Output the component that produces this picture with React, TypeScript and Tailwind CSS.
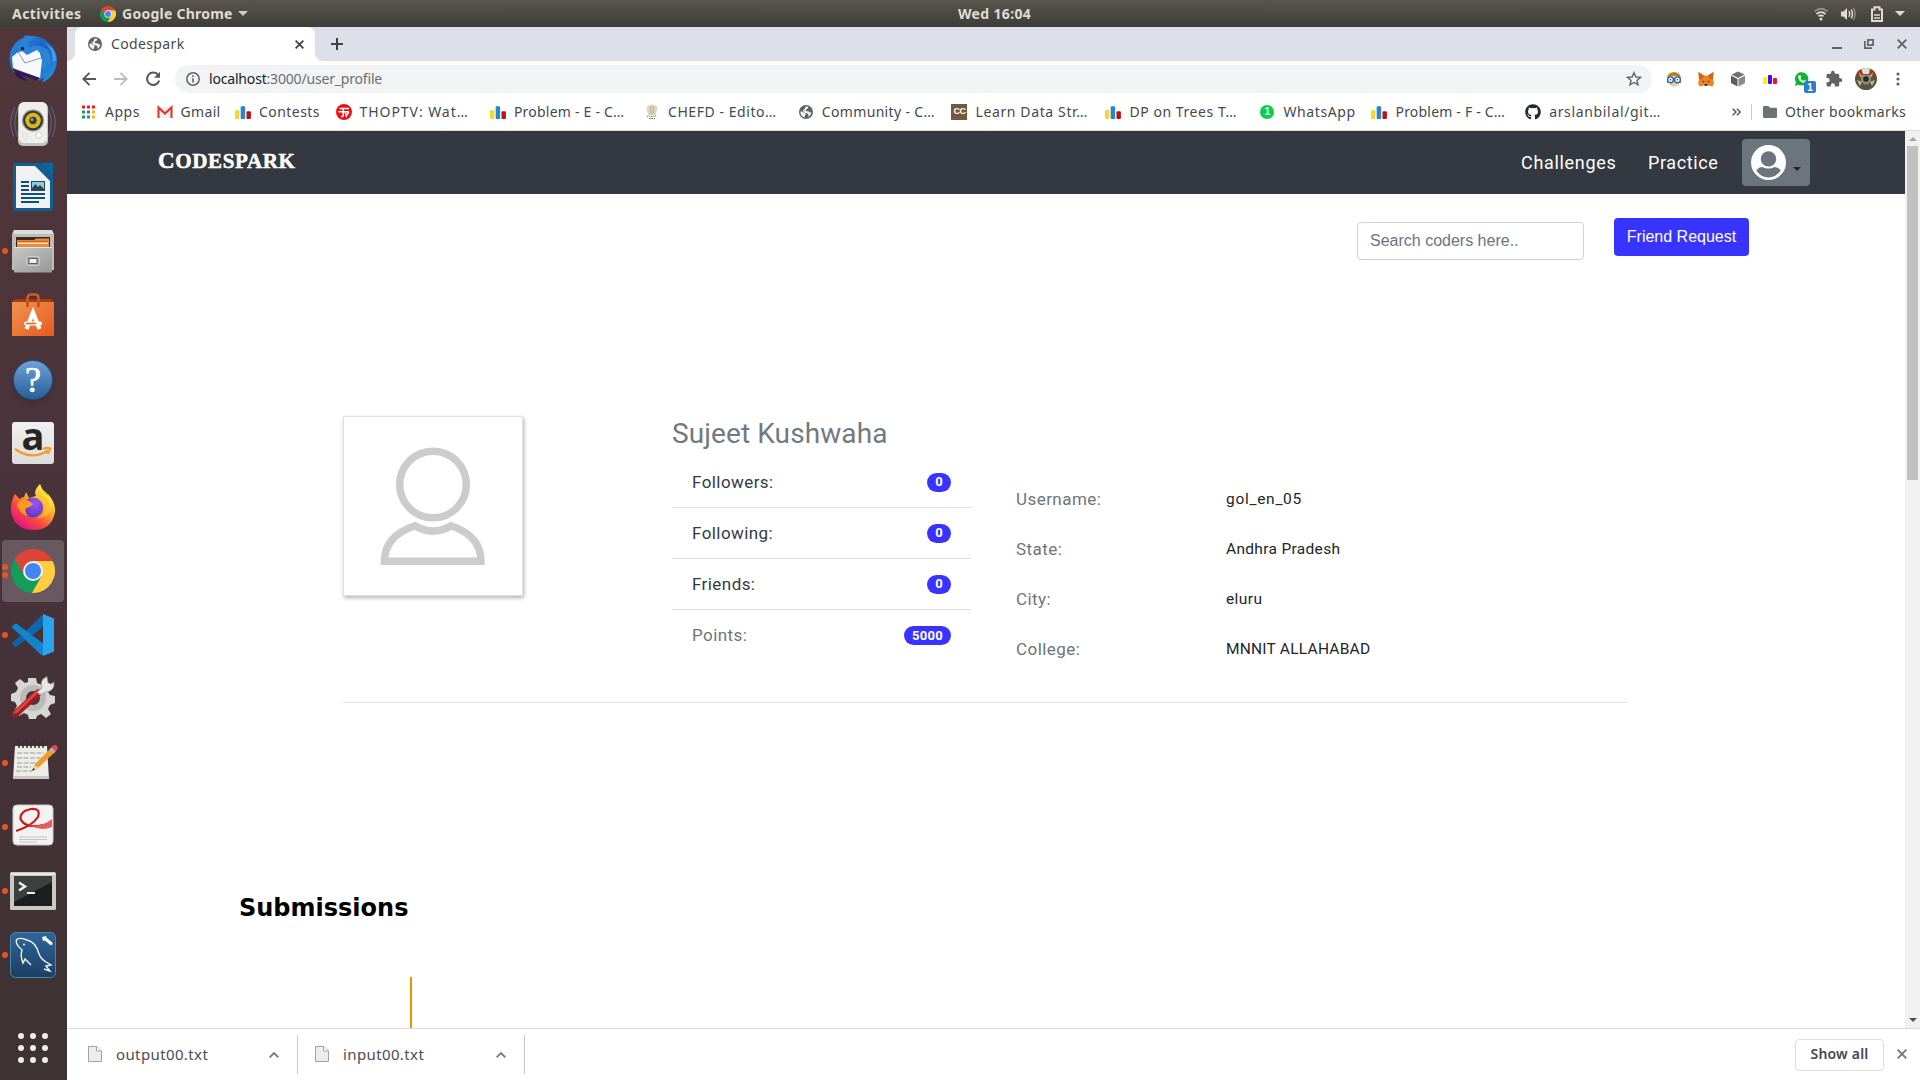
import type { ReactNode } from "react";
import { FaGithub } from "react-icons/fa";

/* ---------- Shared icons ---------- */

function ChromeLogo({ className }: { className: string }) {
  return (
    <svg viewBox="2 2 44 44" className={className}>
      <path d="M24 24V14H43.6A22 22 0 0 0 5.54 12.03L15.34 29Z" fill="#dc4437" />
      <path d="M24 24L15.34 29 5.54 12.03A22 22 0 0 0 22.86 45.97L32.66 29Z" fill="#129d58" />
      <path d="M24 24L32.66 29 22.86 45.97A22 22 0 0 0 43.6 14H24Z" fill="#ffcd41" />
      <circle cx="24" cy="24" r="10" fill="#f3f3f3" />
      <circle cx="24" cy="24" r="8" fill="#4285f4" />
    </svg>
  );
}

function Globe() {
  return (
    <svg viewBox="0 0 16 16" className="size-4 shrink-0">
      <circle cx="8" cy="8" r="7" fill="#5f6368" />
      <path d="M2.4 7.6c1.3-.4 2.5 0 3.2 1.1l1.7.6c.9.5.4 1.5-.3 2l-.5 2.3C4.2 13 2.2 10.7 2.4 7.6ZM7.6 2.6l2.7.1-.4 1.8-1.9 1-.3 1.5 3.2.4 1 1.2 1.400-.3c-.1 2.1-1.3 3.8-3 4.6l.2-2.1-1.4-1.6-2.9-.4-1.3-2.3 1.8-1.5Z" fill="#fff" opacity=".92" />
    </svg>
  );
}

function Bars() {
  return (
    <svg viewBox="0 0 16 16" className="size-4 shrink-0">
      <rect x="0" y="6" width="4.4" height="9" rx="1" fill="#fbd62f" />
      <rect x="5.7" y="2.3" width="4.4" height="12.7" rx="1" fill="#1f87d6" />
      <rect x="11.5" y="7.3" width="4.4" height="7.7" rx="1" fill="#c40d10" />
    </svg>
  );
}

function Cross({ className }: { className: string }) {
  return (
    <svg viewBox="0 0 10 10" className={className} stroke="currentColor" strokeWidth="1.9">
      <path d="M.7.7L9.3 9.3M9.3.7L.7 9.3" />
    </svg>
  );
}

/* ---------- GNOME top bar ---------- */

function TopBar() {
  return (
    <div className="relative flex h-[27px] shrink-0 items-center bg-linear-to-b from-[#59564e] to-[#3d3c36] text-[14px] font-bold text-[#dfdbd2]">
      <span className="ml-3 w-[88px] tracking-[0.45px]">Activities</span>
      <ChromeLogo className="size-4" />
      <span className="ml-1.5 tracking-[0.25px]">Google Chrome</span>
      <svg viewBox="0 0 10 5" className="ml-[5px] h-[5px] w-[10px]"><path d="M0 0H10L5 5Z" fill="#cfccc4" /></svg>
      <span className="absolute left-[958px] tracking-[0.34px]">Wed 16:04</span>
      <div className="ml-auto flex items-center pr-[15px]">
        <svg viewBox="0 0 16 14" className="mr-[11px] h-[14px] w-4" fill="none" stroke="#dfdbd2" strokeWidth="1.7">
          <path d="M1.5 4.5Q8-1 14.5 4.5" opacity=".45" />
          <path d="M3.5 7Q8 3.3 12.5 7" />
          <path d="M5.5 9.3Q8 7.4 10.5 9.3" />
          <circle cx="8" cy="12" r="1.5" fill="#dfdbd2" stroke="none" />
        </svg>
        <svg viewBox="0 0 16 14" className="mr-[15px] h-[14px] w-4" fill="none" stroke="#dfdbd2" strokeWidth="1.5">
          <path d="M1 4.5H3.5L7 1V13L3.5 9.5H1Z" fill="#dfdbd2" stroke="none" />
          <path d="M9 4Q10.5 7 9 10M11.3 2.5Q13.5 7 11.3 11.5" />
          <path d="M13.5 1Q16.5 7 13.5 13" opacity=".45" />
        </svg>
        <svg viewBox="0 0 12 16" className="mr-[12px] h-4 w-3" fill="none" stroke="#dfdbd2" strokeWidth="2">
          <path d="M1 15V3.5H3.5V1.2H8.5V3.5H11V15Z" />
          <path d="M3 9H9M3 12H9" strokeWidth="1.5" />
        </svg>
        <svg viewBox="0 0 10 5" className="h-[5px] w-[10px]"><path d="M0 0H10L5 5Z" fill="#dfdbd2" /></svg>
      </div>
    </div>
  );
}

/* ---------- Dock ---------- */

const thunderbird = (
  <svg viewBox="0 0 48 48" className="size-12">
    <defs>
      <linearGradient id="tb" x1="0" y1="0" x2="1" y2="1"><stop offset="0" stopColor="#2f8fe0" /><stop offset=".5" stopColor="#1b5fc4" /><stop offset="1" stopColor="#2a9be6" /></linearGradient>
    </defs>
    <path d="M1 27C-1 17 5 6 15 2.5 14 1 17 0 21 1 36 0 48 12 48 25 48 36 41 45 33 47.5L35 43 28 46 31 40Q10 38 4 30L5 38Q2 34 1 27Z" fill="url(#tb)" />
    <path d="M5 37L12 40 19 46C12 45 7 42 5 37Z" fill="#2a1560" />
    <path d="M3 22L9 17 30 14 33 26 31 43 9 35 4 33Z" fill="#f6f8fb" />
    <path d="M3 34L31 43 28 46 19 42 9 39Z" fill="#2a1560" opacity=".85" />
    <path d="M9 17L16 28 32 23" fill="none" stroke="#8b98a8" strokeWidth="1" />
    <path d="M9 18Q9 6 21 1L27 2Q16 7 20 12 29 8 38 14 43 20 41 31L38 27 37 36 33 32Q35 20 28 15L18 20 12 15Z" fill="#2b84d8" />
    <path d="M30 5Q44 10 44 27L47 25Q47 11 30 5Z" fill="#3ea7e8" />
    <circle cx="13.5" cy="13.5" r="1.7" fill="#161e38" />
  </svg>
);

const rhythmbox = (
  <svg viewBox="0 0 48 48" className="size-12">
    <g fill="none" stroke="#647aa6" strokeWidth="1.3">
      <path d="M6 8Q-2 23 5 38M10 8Q2 23 9 38" opacity=".6" />
      <path d="M42 8Q50 23 43 38M38 8Q46 23 39 38" opacity=".6" />
    </g>
    <rect x="9" y="4" width="30" height="43" rx="5" fill="#c5c5c2" />
    <rect x="10" y="3" width="28" height="41" rx="5" fill="#eeeeec" />
    <circle cx="24" cy="21.5" r="11" fill="#8e9290" />
    <circle cx="24" cy="21.5" r="9.8" fill="#33372e" />
    <circle cx="24" cy="21.5" r="7.8" fill="#d9b718" />
    <circle cx="24" cy="21.5" r="3.7" fill="#3a3a3a" />
    <circle cx="23" cy="20.5" r="1.5" fill="#999" />
    <circle cx="30" cy="36" r="3" fill="#fff" stroke="#cfcfcf" />
    <rect x="14" y="34" width="4" height="6" rx="1.5" fill="none" stroke="#dcdcda" />
  </svg>
);

const writer = (
  <svg viewBox="0 0 40 48" className="h-12 w-10">
    <path d="M3 0H28L40 12V45Q40 48 37 48H3Q0 48 0 45V3Q0 0 3 0Z" fill="#0e5f94" />
    <path d="M28 0H40V12Z" fill="#0369a3" />
    <path d="M3 3H22L37 18V45H3Z" fill="#f1f1f1" />
    <path d="M8 19H16M8 23H16M8 27H16M8 31H32M8 35H32M8 39H26" stroke="#0c4f7d" strokeWidth="2" />
    <rect x="18" y="18" width="14" height="10" fill="#0c4f7d" />
    <rect x="19" y="19" width="12" height="8" fill="#8ccbee" />
    <path d="M19 27V25L22.5 21 25 24 27 22 31 26V27Z" fill="#32454c" />
    <circle cx="29" cy="21" r="1.5" fill="#e8c33c" />
  </svg>
);

const files = (
  <svg viewBox="0 0 42 44" className="h-11 w-[42px]">
    <defs><linearGradient id="fl" x1="0" y1="0" x2="1" y2="1"><stop offset="0" stopColor="#c8c8c8" /><stop offset="1" stopColor="#969696" /></linearGradient></defs>
    <path d="M2 1H40L42 5V41H0V5Z" fill="#bcbcb9" />
    <path d="M2 1H40L41 5H1Z" fill="#dddddb" />
    <rect x="4" y="8" width="34" height="10" fill="#3a2a22" />
    <path d="M5 11H22L24 9.5H37V18H5Z" fill="#ee8a35" />
    <path d="M6 14.3H36" stroke="#fbe3c4" strokeWidth="1.5" />
    <path d="M6 12.3H36" stroke="#c95a1d" />
    <rect x="2" y="18" width="38" height="25.5" fill="url(#fl)" />
    <path d="M2 18.5H40" stroke="#e3e3e3" />
    <rect x="14.5" y="27.5" width="13" height="9" rx="2" fill="#a8a8a8" stroke="#cfcfcf" />
    <rect x="17" y="29.5" width="8" height="5" fill="#f2f2f2" stroke="#5b5b5b" />
  </svg>
);

const software = (
  <svg viewBox="0 0 42 44" className="h-11 w-[42px]">
    <defs><linearGradient id="sw" x1="0" y1="0" x2="1" y2="1"><stop offset="0" stopColor="#f19350" /><stop offset="1" stopColor="#e55a20" /></linearGradient></defs>
    <path d="M0 9L3 6H39L42 9Z" fill="#a63c14" />
    <path d="M15.5 14V5Q15.5 1.5 19 1.5H23Q26.5 1.5 26.5 5V14" fill="none" stroke="#d4572a" strokeWidth="2.6" />
    <rect x="0" y="9" width="42" height="34" fill="url(#sw)" />
    <path d="M15.5 14V9M26.5 14V9" stroke="#c04b1e" strokeWidth="2.6" />
    <path d="M14.5 36L21 19.5 27.5 36" fill="none" stroke="#fff" strokeWidth="4.2" />
    <rect x="12" y="28.5" width="18" height="4" rx="2" fill="#fff" />
    <path d="M14 30.5H24" stroke="#e8662b" strokeWidth="1.6" />
  </svg>
);

const help = (
  <div className="mt-px flex size-10 items-center justify-center rounded-full border border-[#1f5286] bg-linear-to-b from-[#6ea3d8] to-[#265f99] shadow-md">
    <span className="font-['Liberation_Serif',serif] text-[36px] leading-none text-white [-webkit-text-stroke:0.6px_white]">?</span>
  </div>
);

const amazon = (
  <div className="relative flex size-[42px] justify-center rounded-[3px] bg-linear-to-b from-[#f0f0f0] to-[#dcdcdc]">
    <span className="mt-[-8px] font-['Open_Sans',sans-serif] text-[38px] leading-[42px] font-bold text-[#262626]">a</span>
    <svg viewBox="0 0 42 14" className="absolute bottom-1 left-0 h-[14px] w-[42px]" fill="none" stroke="#f79a1d" strokeWidth="2.2">
      <path d="M3 3Q20 15 36 4.5M31 3Q36 1 38 2.5 38 5 35.5 8" />
    </svg>
  </div>
);

const firefox = (
  <svg viewBox="0 0 46 48" className="h-12 w-[46px]">
    <defs>
      <linearGradient id="ff" x1=".8" y1=".1" x2=".2" y2=".9"><stop offset="0" stopColor="#fff04a" /><stop offset=".35" stopColor="#ffae2c" /><stop offset=".68" stopColor="#fb4a3e" /><stop offset="1" stopColor="#e3177f" /></linearGradient>
      <radialGradient id="fp" cx=".6" cy=".3" r=".8"><stop offset="0" stopColor="#9a55f5" /><stop offset="1" stopColor="#5336b8" /></radialGradient>
    </defs>
    <path d="M5 11L9.5 16Q12 14 14 14L16 9 19 15 26 13Q23 8 30 1 31 7 37 13L38 11Q46 20 45 29 42 47 23 47 3 46 .8 27 1 17 5 11Z" fill="url(#ff)" />
    <circle cx="23" cy="24.5" r="10" fill="url(#fp)" />
    <path d="M7 22Q10 15 19 18L23 21Q21 24 16 25 14 29 18 33 10 31 7 22Z" fill="#ff9a1f" />
    <path d="M30 1Q29 9 36 15 41 22 38 30 43 26 42 18 38 10 33 7Z" fill="#ffe63e" opacity=".8" />
    <path d="M22 15Q32 12 35 22 36 32 27 35 44 34 40 20 36 11 26 13Z" fill="#ffc42c" opacity=".75" />
  </svg>
);

const vscode = (
  <svg viewBox="0 0 42 42" className="size-[42px]">
    <path d="M0 30L31 .5V13L4 33Z" fill="#0d68ad" />
    <path d="M0 12.5L4 9.5 31 29.5V41.5L0 13.5Z" fill="#1084cf" />
    <path d="M31 0L42 4.5V37.5L31 42Z" fill="#29a4ee" />
    <path d="M0 29L12 18.5 17 22 4 33Z" fill="#0c63a7" />
    <path d="M0 12.5L4 9.5 31 29.5V41.5L28 40Z" fill="#1284cd" />
  </svg>
);

const settings = (
  <svg viewBox="0 0 44 44" className="-mt-1 size-11">
    <path d="M17 3H25L26 8 31 10 36 6 41 12 37 17 39 20 44 21V28L39 30 37 34 40 39 35 43 30 39 26 41 25 44H18L17 40 13 38 8 41 3 36 6 31 4 27 0 26V19L5 17 7 13 4 8 9 4 14 8 17 7Z" fill="#d6d6d4" />
    <circle cx="22" cy="23" r="13" fill="#bababa" />
    <circle cx="22" cy="23" r="7" fill="#4b353b" />
    <path d="M4.500 39L27 18" stroke="#a61c1e" strokeWidth="7" strokeLinecap="round" />
    <path d="M4 38L26 17" stroke="#dd4447" strokeWidth="3" strokeLinecap="round" />
    <circle cx="4.5" cy="39.5" r="1.3" fill="#4b353b" />
    <path d="M26 17L31 13Q28 5 36 1.5L37 8 40 9 43 7Q44 16 35 17L29 20Z" fill="#e6e6e4" stroke="#8e8e8e" strokeWidth=".7" />
  </svg>
);

const notes = (
  <svg viewBox="0 0 48 40" className="-mt-1 ml-1 h-10 w-12">
    <path d="M4 5H36L38 38H2Z" fill="#ecece8" />
    <path d="M2 35H38V38H2Z" fill="#c9c9c4" />
    <path d="M8 1.5V7M12 1.5V7M16 1.5V7M20 1.5V7M24 1.5V7M28 1.5V7M32 1.5V7" stroke="#2f2f2d" strokeWidth="1.5" />
    <path d="M6 12H33M6 17H30M6 22H26M6 26H20M5 30H21" stroke="#9b9b98" strokeDasharray="5 1.5" />
    <path d="M21 30L24 23 40 7 44 11 28 26Z" fill="#f29b2c" />
    <path d="M23.5 24L27.5 27 21 30Z" fill="#f0d3a2" />
    <path d="M21 30L22.3 27 24 28.5Z" fill="#222" />
    <path d="M38.5 8.5L41 6 45 10 42.5 12.5Z" fill="#a9b4ba" />
    <path d="M40.500 6.500Q43 2.5 46 5 48 8 44.5 10.5Z" fill="#e8464a" />
  </svg>
);

const evince = (
  <svg viewBox="0 0 42 42" className="-mt-1 size-[42px]">
    <rect x="1" y="1" width="40" height="40" rx="4" fill="#f2f2f2" stroke="#c9c9c7" />
    <path d="M4 27Q20 22 26 13 29 4 19 5 8 7 8.5 15 14 27 39 19" fill="none" stroke="#cc1818" strokeWidth="2.2" />
    <path d="M16 20Q27 25 40 15V23Q28 28 16 20Z" fill="#e06060" />
    <path d="M7 33H35M7 35.5H35M7 38H25" stroke="#c4c4c4" />
  </svg>
);

const terminal = (
  <svg viewBox="0 0 46 38" className="h-[38px] w-[46px]">
    <rect width="46" height="38" rx="1.5" fill="#c9c9c6" />
    <rect x="1" y="1" width="44" height="2" fill="#e9e9e7" />
    <rect x="4" y="4" width="38" height="30" fill="#1c1f1e" />
    <path d="M4 4H42V10L4 30Z" fill="#3d403f" />
    <path d="M9 10.5L15 14.5 9 18.5" fill="none" stroke="#eee" strokeWidth="2.5" />
    <path d="M17 21H25" stroke="#eee" strokeWidth="2" />
  </svg>
);

const workbench = (
  <svg viewBox="0 0 46 46" className="size-[46px]">
    <defs><linearGradient id="wb" x1="0" y1="0" x2="0" y2="1"><stop offset="0" stopColor="#30669c" /><stop offset="1" stopColor="#1b3f61" /></linearGradient></defs>
    <rect x=".5" y=".5" width="45" height="45" rx="5" fill="url(#wb)" stroke="#4a86b5" />
    <path d="M21 33L15 27 13 31Q10 24 12 18 5 12 6.5 7.5 11 5 17 8 26 10 29 22 31 27 36 30L41 33 36 34 40 39 34 37" fill="none" stroke="#eef5fa" strokeWidth="1.4" />
    <circle cx="14" cy="12.5" r="1" fill="#fff" />
    <path d="M35 6.500L41 11.500" stroke="#f4f8fb" strokeWidth="3.200" strokeLinecap="round" />
    <path d="M32 5L36 4 37 8 33 9Z" fill="#f4f8fb" />
  </svg>
);

type DockItem = { name: string; icon: ReactNode; dots?: number; active?: boolean };

const dock: DockItem[] = [
  { name: "Thunderbird", icon: thunderbird },
  { name: "Rhythmbox", icon: rhythmbox },
  { name: "Writer", icon: writer },
  { name: "Files", icon: files, dots: 1 },
  { name: "Software", icon: software },
  { name: "Help", icon: help },
  { name: "Amazon", icon: amazon },
  { name: "Firefox", icon: firefox },
  { name: "Chrome", icon: <ChromeLogo className="size-11" />, dots: 2, active: true },
  { name: "VS Code", icon: vscode, dots: 1 },
  { name: "Settings", icon: settings },
  { name: "Notes", icon: notes, dots: 1 },
  { name: "Document viewer", icon: evince, dots: 1 },
  { name: "Terminal", icon: terminal, dots: 1 },
  { name: "Workbench", icon: workbench, dots: 1 },
];

function Dock() {
  return (
    <aside className="flex w-[67px] shrink-0 flex-col bg-linear-to-b from-[#51373b] via-[#48323a] to-[#3d3234]">
      {dock.map(({ name, icon, dots = 0, active }) => (
        <div key={name} className="relative flex h-16 shrink-0 items-center pl-0.5">
          <div className={`flex h-[62px] w-[62px] items-center justify-center rounded-[4px] ${active ? "bg-[#685860]" : ""}`}>{icon}</div>
          <div className="absolute top-0 left-[2px] flex h-16 flex-col justify-center gap-[2px]">
            {Array.from({ length: dots }, (_, i) => (
              <span key={i} className="size-1.5 rounded-full bg-[#e95420]" />
            ))}
          </div>
        </div>
      ))}
      <div className="mx-auto mt-auto mb-[17px] grid grid-cols-3 gap-1.5 pr-px">
        {Array.from({ length: 9 }, (_, i) => (
          <span key={i} className="size-1.5 rounded-full bg-[#f0efee]" />
        ))}
      </div>
    </aside>
  );
}

/* ---------- Chrome window ---------- */

function TabStrip() {
  return (
    <div className="flex h-[34px] shrink-0 items-center bg-[#dde0e8]">
      <div className="h-full w-2 bg-white"><div className="h-full w-full rounded-br-[8px] bg-[#dde0e8]" /></div>
      <div className="flex h-full w-[240px] items-center rounded-t-[8px] bg-white pr-[11px] pl-3">
        <Globe />
        <span className="ml-2 pb-px text-[14px] tracking-[0.36px] text-[#45494d]">Codespark</span>
        <Cross className="ml-auto size-[9px] text-[#3c4043]" />
      </div>
      <div className="h-full w-2 bg-white"><div className="h-full w-full rounded-bl-[8px] bg-[#dde0e8]" /></div>
      <svg viewBox="0 0 12 12" className="ml-2 size-3" stroke="#3c4043" strokeWidth="2"><path d="M6 0V12M0 6H12" /></svg>
      <div className="ml-auto flex items-center pr-[13px] text-[#5f6368]">
        <span className="mt-2 mr-[22px] h-0.5 w-[10px] bg-[#5f6368]" />
        <svg viewBox="0 0 10 10" className="mr-[23px] size-[10px]" fill="none" stroke="currentColor" strokeWidth="1.7">
          <rect x="3.9" y=".9" width="5.2" height="5.2" />
          <path d="M.9 2V9.1H8" />
        </svg>
        <Cross className="size-[10px]" />
      </div>
    </div>
  );
}

function ExtensionIcons() {
  return (
    <div className="flex items-center gap-4">
      <svg viewBox="0 0 16 16" className="size-4">
        <path d="M1 12Q0 1 8 1T15 12Z" fill="#b8801f" />
        <path d="M2.500 8Q4 4 8 5 12 4 13.500 8V11Q12 15.500 8 15.500T2.500 11Z" fill="#f7c796" />
        <circle cx="4.500" cy="8.800" r="2.900" fill="#fff" stroke="#2467bd" strokeWidth="1.400" />
        <circle cx="11.500" cy="8.800" r="2.900" fill="#fff" stroke="#2467bd" strokeWidth="1.400" />
        <circle cx="4.500" cy="8.800" r=".8" fill="#234" />
        <circle cx="11.500" cy="8.800" r=".8" fill="#234" />
      </svg>
      <svg viewBox="0 0 16 16" className="size-4">
        <path d="M.5 1L6 4.5H10L15.5 1 15 9 16 12 14.5 15.5 10.5 14.5H5.5L1.5 15.5 0 12 1 9Z" fill="#ee8422" />
        <path d="M.5 1L6 4.5 4.5 8 1 8.5ZM15.5 1L10 4.5 11.5 8 15 8.5Z" fill="#cc6a18" />
        <path d="M4.5 9.5L6.8 10.5 5 11.5ZM11.5 9.5L9.2 10.5 11 11.5ZM6.5 13H9.5V14.8H6.5Z" fill="#3a2a20" />
      </svg>
      <svg viewBox="0 0 16 16" className="size-4">
        <path d="M8 .5L14.5 3.5 8 7 1.5 3.5Z" fill="#707070" />
        <path d="M1 4.5L7.5 8V15.5L1 12Z" fill="#5d5d5d" />
        <path d="M15 4.5L8.5 8V15.5L15 12Z" fill="#8a8a8a" />
      </svg>
      <svg viewBox="0 0 16 16" className="size-4">
        <rect x="1" y="6" width="4" height="7" rx="1" fill="#fff200" />
        <rect x="6" y="4" width="4" height="9" rx="1" fill="#4a0af5" />
        <rect x="11" y="7" width="4" height="6" rx="1" fill="#fb0a2a" />
      </svg>
      <div className="relative size-4">
        <svg viewBox="0 0 16 16" className="size-4">
          <path d="M.8 15L2 11.5A6.700 6.700 0 1 1 4.500 13.800Z" fill="#0fb52c" />
          <path d="M5 4.2L6.300 4 7.200 6 6.400 7.200Q7.500 9.300 9.500 10L10.600 9 12.400 10Q12 12 10 12 5.300 11 4.200 6.500 4.200 5 5 4.200Z" fill="#fff" />
        </svg>
        <span className="absolute top-2.5 left-2.5 flex h-3 w-3 items-center justify-center rounded-[2px] bg-[#2b7ecb] font-['Liberation_Sans',sans-serif] text-[10px] font-bold text-white">1</span>
      </div>
      <svg viewBox="0 0 24 24" className="-mr-px -ml-px size-[18px]" fill="#5f6368">
        <path d="M20.5 11H19V7a2 2 0 0 0-2-2h-4V3.5a2.5 2.5 0 0 0-5 0V5H4a2 2 0 0 0-2 2v3.8h1.5a2.7 2.7 0 0 1 0 5.4H2V20a2 2 0 0 0 2 2h3.8v-1.5a2.7 2.7 0 0 1 5.4 0V22H17a2 2 0 0 0 2-2v-4h1.5a2.5 2.5 0 0 0 0-5z" />
      </svg>
      <svg viewBox="0 0 22 22" className="-ml-[3px] size-[22px]">
        <defs><clipPath id="av"><circle cx="11" cy="11" r="11" /></clipPath></defs>
        <g clipPath="url(#av)">
          <rect width="22" height="22" fill="#5b5440" />
          <path d="M1 3L5 1 8 7 5 10ZM21 3L17 1 14 6 17 10Z" fill="#b0301f" />
          <path d="M6 0H15L14 6H8Z" fill="#e4dfce" />
          <path d="M6 7H16L16 13 11 18 6 13Z" fill="#8c8c84" />
          <circle cx="11" cy="11" r="2.8" fill="#2a2723" />
          <path d="M2 12L7 14 5 18ZM20 12L15 14 17 18Z" fill="#bfb79c" />
          <path d="M5 19L11 16 17 19 15 22H7Z" fill="#4c5a44" />
          <path d="M4 4L7 8 5 9ZM18 4L15 8 17 9Z" fill="#e0b43a" />
        </g>
      </svg>
      <svg viewBox="0 0 4 14" className="ml-[3px] h-[14px] w-1" fill="#5f6368">
        <circle cx="2" cy="2" r="1.6" /><circle cx="2" cy="7" r="1.6" /><circle cx="2" cy="12" r="1.6" />
      </svg>
    </div>
  );
}

function Toolbar() {
  return (
    <div className="flex h-9 shrink-0 items-center bg-white pr-5 pl-[15px]">
      <svg viewBox="0 0 14 14" className="size-[14px]" fill="none" stroke="#55595e" strokeWidth="1.9"><path d="M14 7H1.5M7.5 .8L1.3 7 7.5 13.2" /></svg>
      <svg viewBox="0 0 14 14" className="ml-[18px] size-[14px]" fill="none" stroke="#bbbdc0" strokeWidth="1.9"><path d="M0 7H12.5M6.5 .8L12.7 7 6.5 13.2" /></svg>
      <svg viewBox="0 0 16 16" className="ml-[17px] size-4" fill="none" stroke="#55595e" strokeWidth="2">
        <path d="M13.3 4.2A6.200 6.200 0 1 0 14.200 9.500" />
        <path d="M15 .8V6.8H9Z" fill="#55595e" stroke="none" />
      </svg>
      <div className="ml-[14px] flex h-7 w-[1477px] items-center rounded-full bg-[#f1f3f4] pr-[10px] pl-[11px]">
        <svg viewBox="0 0 14 14" className="size-[14px]" fill="none" stroke="#5f6368" strokeWidth="1.5">
          <circle cx="7" cy="7" r="6.2" /><path d="M7 6.2V10.5M7 3.3V4.9" strokeWidth="1.6" />
        </svg>
        <span className="ml-[9px] pb-px text-[14px] tracking-[-0.18px] text-[#6b6f73]"><span className="text-[#202124]">localhost</span>:3000/user_profile</span>
        <svg viewBox="0 0 16 16" className="ml-auto size-4" fill="none" stroke="#5f6368" strokeWidth="1.4">
          <path d="M8 1.8L9.9 6 14.4 6.4 11 9.4 12 13.8 8 11.5 4 13.8 5 9.4 1.6 6.4 6.1 6Z" />
        </svg>
      </div>
      <div className="ml-auto"><ExtensionIcons /></div>
    </div>
  );
}

const appsIcon = (
  <svg viewBox="0 0 16 16" className="size-4 shrink-0">
    <path d="M1 1.5h3v3H1ZM6 1.5h3v3H6ZM11 1.5h3v3H11Z" fill="#ee1c23" />
    <path d="M1 6.5h3v3H1Z" fill="#12a556" /><path d="M6 6.5h3v3H6Z" fill="#3a6cf0" /><path d="M11 6.5h3v3H11Z" fill="#f8b50b" />
    <path d="M1 11.5h3v3H1ZM6 11.5h3v3H6Z" fill="#12a556" /><path d="M11 11.5h3v3H11Z" fill="#f8b50b" />
  </svg>
);
const gmailIcon = (
  <svg viewBox="0 0 16 16" className="size-4 shrink-0">
    <rect x="1" y="3" width="14" height="11" fill="#eceff1" />
    <path d="M1.500 14V3.5L8 9.5 14.500 3.5V14" fill="none" stroke="#d93a2b" strokeWidth="2.1" />
  </svg>
);
const thopIcon = (
  <svg viewBox="0 0 16 16" className="size-4 shrink-0">
    <circle cx="8" cy="8" r="8" fill="#ee0f12" />
    <path d="M3.500 4.500H13M2.500 7.800H13M7.200 4.500V11.500Q7.200 12.800 5 12.500M9.200 8L10.300 12 12.800 8" fill="none" stroke="#fff" strokeWidth="1.5" />
  </svg>
);
const chefIcon = (
  <svg viewBox="0 0 16 16" className="size-4 shrink-0">
    <path d="M3.5 8Q1 1 6 1.5 8-.5 10.5 1.5 15 1 12.5 8L11.5 11H4.5Z" fill="#ddd6bd" />
    <path d="M6.5 2L7 10M9.5 2L9 10" stroke="#aaa07c" strokeWidth=".7" />
    <path d="M3 12.5L5 11.5 6.5 13 8 12 9.5 13 11 11.5 13 12.5M5 14.5H11" fill="none" stroke="#7b5c48" strokeDasharray="1.5 1" />
  </svg>
);
const ccIcon = (
  <span className="flex size-4 shrink-0 items-center justify-center bg-[#76593c] font-['Liberation_Sans',sans-serif] text-[9px] font-bold tracking-[-0.5px] text-white">CC</span>
);
const whatsappIcon = (
  <span className="flex size-4 shrink-0 items-center justify-center">
    <span className="flex size-3.5 items-center justify-center rounded-full bg-[#05cf4b] font-['Liberation_Sans',sans-serif] text-[10px] font-bold text-white">1</span>
  </span>
);

const bookmarks: { label: string; icon: ReactNode; cls: string }[] = [
  { label: "Apps", icon: appsIcon, cls: "w-[75.5px] tracking-[0.5px]" },
  { label: "Gmail", icon: gmailIcon, cls: "w-[78.5px] tracking-[0.33px]" },
  { label: "Contests", icon: <Bars />, cls: "w-[100.5px] tracking-[0.45px]" },
  { label: "THOPTV: Wat…", icon: thopIcon, cls: "w-[154.4px] tracking-[0.94px]" },
  { label: "Problem - E - C…", icon: <Bars />, cls: "w-[154.1px] tracking-[0.22px]" },
  { label: "CHEFD - Edito…", icon: chefIcon, cls: "w-[153.8px] tracking-[0.56px]" },
  { label: "Community - C…", icon: <Globe />, cls: "w-[153.7px] tracking-[0.34px]" },
  { label: "Learn Data Str…", icon: ccIcon, cls: "w-[154px] tracking-[0.62px]" },
  { label: "DP on Trees T…", icon: <Bars />, cls: "w-[154px] tracking-[0.55px]" },
  { label: "WhatsApp", icon: whatsappIcon, cls: "w-[112px] tracking-[0.6px]" },
  { label: "Problem - F - C…", icon: <Bars />, cls: "w-[153.7px] tracking-[0.2px]" },
  { label: "arslanbilal/git…", icon: <FaGithub className="size-4 shrink-0 text-[#24292e]" />, cls: "w-[160px] tracking-[0.66px]" },
];

function BookmarksBar() {
  return (
    <div className="flex h-[34px] shrink-0 items-center border-b border-[#dadce0] bg-white pb-1 pl-[14px] text-[14px] text-[#45494d]">
      {bookmarks.map(({ label, icon, cls }) => (
        <div key={label} className={`flex shrink-0 items-center gap-2 whitespace-nowrap ${cls}`}>
          {icon}
          {label}
        </div>
      ))}
      <div className="ml-auto flex items-center pr-[14px]">
        <svg viewBox="0 0 9 8" className="h-2 w-[9px]" fill="none" stroke="#55595e" strokeWidth="1.5"><path d="M.7.7L4 4 .7 7.3M4.9.7L8.2 4 4.9 7.3" /></svg>
        <span className="ml-[10px] h-4 w-px bg-[#c8cacd]" />
        <svg viewBox="0 0 14 12" className="ml-[11px] h-3 w-[14px]" fill="#6e7276"><path d="M1 0H5.5L7 1.7H13Q14 1.7 14 2.7V11Q14 12 13 12H1Q0 12 0 11V1Q0 0 1 0Z" /></svg>
        <span className="ml-2 tracking-[0.34px]">Other bookmarks</span>
      </div>
    </div>
  );
}

/* ---------- Codespark page ---------- */

function SiteNav() {
  return (
    <nav className="flex h-[63px] shrink-0 items-center bg-[#343841] pr-[95px] pl-[91px] font-[Roboto,sans-serif] text-[18px] text-white">
      <span className="pb-[3px] font-['Liberation_Serif',serif] text-[21px] font-bold tracking-[0.65px] [-webkit-text-stroke:0.5px_white]"><span className="text-[23px]">C</span>ODESPARK</span>
      <span className="mr-8 ml-auto w-[95px] tracking-[0.68px]">Challenges</span>
      <span className="mr-[23px] w-[71px] tracking-[0.6px]">Practice</span>
      <button className="flex h-[47px] w-[68px] items-center rounded-[4px] bg-[#6c757d] pl-[9px]">
        <svg viewBox="0 0 34 34" className="-mt-px size-[35px]">
          <circle cx="17" cy="17" r="17" fill="#fff" />
          <circle cx="17" cy="13.5" r="7.5" fill="#6c757d" />
          <path d="M5.2 25Q7 21.3 11 21.3 17 24.5 23 21.3 27 21.3 28.8 25 24 31.5 17 31.5T5.2 25Z" fill="#6c757d" />
        </svg>
        <svg viewBox="0 0 8 4" className="mt-3 ml-[7px] h-1 w-2"><path d="M0 0H8L4 4Z" fill="#212529" /></svg>
      </button>
    </nav>
  );
}

function Pill({ children }: { children: ReactNode }) {
  return <span className="flex h-[19px] items-center rounded-full bg-[#3833ff] px-2 text-[13px] font-bold tracking-[0.3px] text-white">{children}</span>;
}

const counts = [
  { label: "Followers:", value: "0", cls: "border-b text-[#343a40]" },
  { label: "Following:", value: "0", cls: "border-b text-[#343a40]" },
  { label: "Friends:", value: "0", cls: "border-b text-[#343a40]" },
  { label: "Points:", value: "5000", cls: "text-[#6c757d]" },
];

const details = [
  { label: "Username:", value: "gol_en_05", cls: "tracking-[0.72px]" },
  { label: "State:", value: "Andhra Pradesh", cls: "tracking-[0.32px]" },
  { label: "City:", value: "eluru", cls: "tracking-[0.4px]" },
  { label: "College:", value: "MNNIT ALLAHABAD", cls: "tracking-[0.24px]" },
];

function Profile() {
  return (
    <section className="ml-[276px] flex h-[287px] w-[1285px] shrink-0 items-start border-b border-[#e2e4e6] font-[Roboto,sans-serif]">
      <div className="size-[180px] border border-[#dee2e6] bg-white shadow-[1px_2px_4px_rgba(0,0,0,0.3)]">
        <svg viewBox="0 0 178 178" className="size-full" fill="none" stroke="#cccccc" strokeWidth="7.5">
          <circle cx="89" cy="67.5" r="33.3" />
          <path d="M71 108.8Q40.5 119 40.5 144.3H137Q137 119 107 108.8 89 119.5 71 108.8Z" />
        </svg>
      </div>
      <div className="ml-[149px] w-[299px]">
        <h1 className="h-[35px] text-[28px] leading-[35px] tracking-[0.1px] text-[#717a82]">Sujeet Kushwaha</h1>
        <ul className="mt-1.5">
          {counts.map(({ label, value, cls }) => (
            <li key={label} className={`flex h-[51px] items-center justify-between border-[#dfdfdf] px-5 text-[17px] tracking-[0.43px] ${cls}`}>
              <span className="pt-px">{label}</span>
              <Pill>{value}</Pill>
            </li>
          ))}
        </ul>
      </div>
      <dl className="mt-[59px] ml-[45px]">
        {details.map(({ label, value, cls }) => (
          <div key={label} className="flex h-[50px] items-center">
            <dt className="w-[210px] text-[17px] tracking-[0.45px] text-[#6c757d]">{label}</dt>
            <dd className={`text-[15.5px] text-[#212529] ${cls}`}>{value}</dd>
          </div>
        ))}
      </dl>
    </section>
  );
}

function Page() {
  return (
    <main className="flex min-w-0 flex-1 flex-col overflow-hidden bg-white">
      <SiteNav />
      <div className="flex h-[222px] shrink-0 items-start justify-end gap-[30px] pt-6 pr-[156px] font-['Liberation_Sans',sans-serif] text-[16px]">
        <input className="mt-1 h-[38px] w-[227px] rounded-[4px] border border-[#ced4da] px-3 pb-px outline-none placeholder:text-[#6c757d]" placeholder="Search coders here.." />
        <button className="h-[38px] w-[135px] rounded-[4px] bg-[#3833ff] whitespace-nowrap text-white">Friend Request</button>
      </div>
      <Profile />
      <h2 className="mt-[191px] ml-[172px] shrink-0 font-['DejaVu_Sans',sans-serif] text-[24px] leading-7 font-bold text-black">Submissions</h2>
      <div className="mt-[55px] ml-[343px] w-0.5 flex-1 bg-[#ee8f00]" />
    </main>
  );
}

function Scrollbar() {
  return (
    <div className="flex w-[15px] shrink-0 flex-col items-center bg-[#f1f1f1] py-1.5">
      <svg viewBox="0 0 8 4" className="h-1 w-2"><path d="M0 4H8L4 0Z" fill="#a3a3a3" /></svg>
      <div className="mt-[5px] h-[334px] w-[11px] bg-[#c1c1c1]" />
      <svg viewBox="0 0 8 4" className="mt-auto h-1 w-2"><path d="M0 0H8L4 4Z" fill="#505050" /></svg>
    </div>
  );
}

/* ---------- Downloads shelf ---------- */

function Download({ name, cls }: { name: string; cls: string }) {
  return (
    <div className={`flex h-[39px] items-center border-r border-[#c8c9cc] pr-[18px] ${cls}`}>
      <svg viewBox="0 0 14 16" className="-mt-px h-4 w-[14px]">
        <path d="M.5.5H9L13.5 5V15.5H.5Z" fill="#ececec" stroke="#a2a2a2" />
        <path d="M8.5.5V5H13.5" fill="#fff" stroke="#a2a2a2" />
      </svg>
      <span className="ml-[14px] pb-px text-[15px] tracking-[0.38px] text-[#4a4e53]">{name}</span>
      <svg viewBox="0 0 10 6" className="ml-auto h-1.5 w-[10px]" fill="none" stroke="#75797d" strokeWidth="1.8"><path d="M.7 5.3L5 1 9.3 5.3" /></svg>
    </div>
  );
}

function DownloadShelf() {
  return (
    <div className="flex h-[52px] shrink-0 items-center border-t border-[#dadce0] bg-white">
      <Download name="output00.txt" cls="w-[231px] pl-[21px]" />
      <Download name="input00.txt" cls="w-[227px] pl-[17px]" />
      <button className="ml-auto h-8 w-[89px] rounded-[4px] border border-[#dadce0] pb-0.5 text-[14px] font-semibold tracking-[0.2px] text-[#45494d]">Show all</button>
      <Cross className="mr-[13px] mb-px ml-[13px] size-[10px] text-[#75797d]" />
    </div>
  );
}

export default function App() {
  return (
    <div className="flex h-[1080px] w-[1920px] flex-col overflow-hidden bg-white font-['Noto_Sans',sans-serif]">
      <TopBar />
      <div className="flex min-h-0 flex-1">
        <Dock />
        <div className="flex min-w-0 flex-1 flex-col">
          <TabStrip />
          <Toolbar />
          <BookmarksBar />
          <div className="flex min-h-0 flex-1">
            <Page />
            <Scrollbar />
          </div>
          <DownloadShelf />
        </div>
      </div>
    </div>
  );
}
